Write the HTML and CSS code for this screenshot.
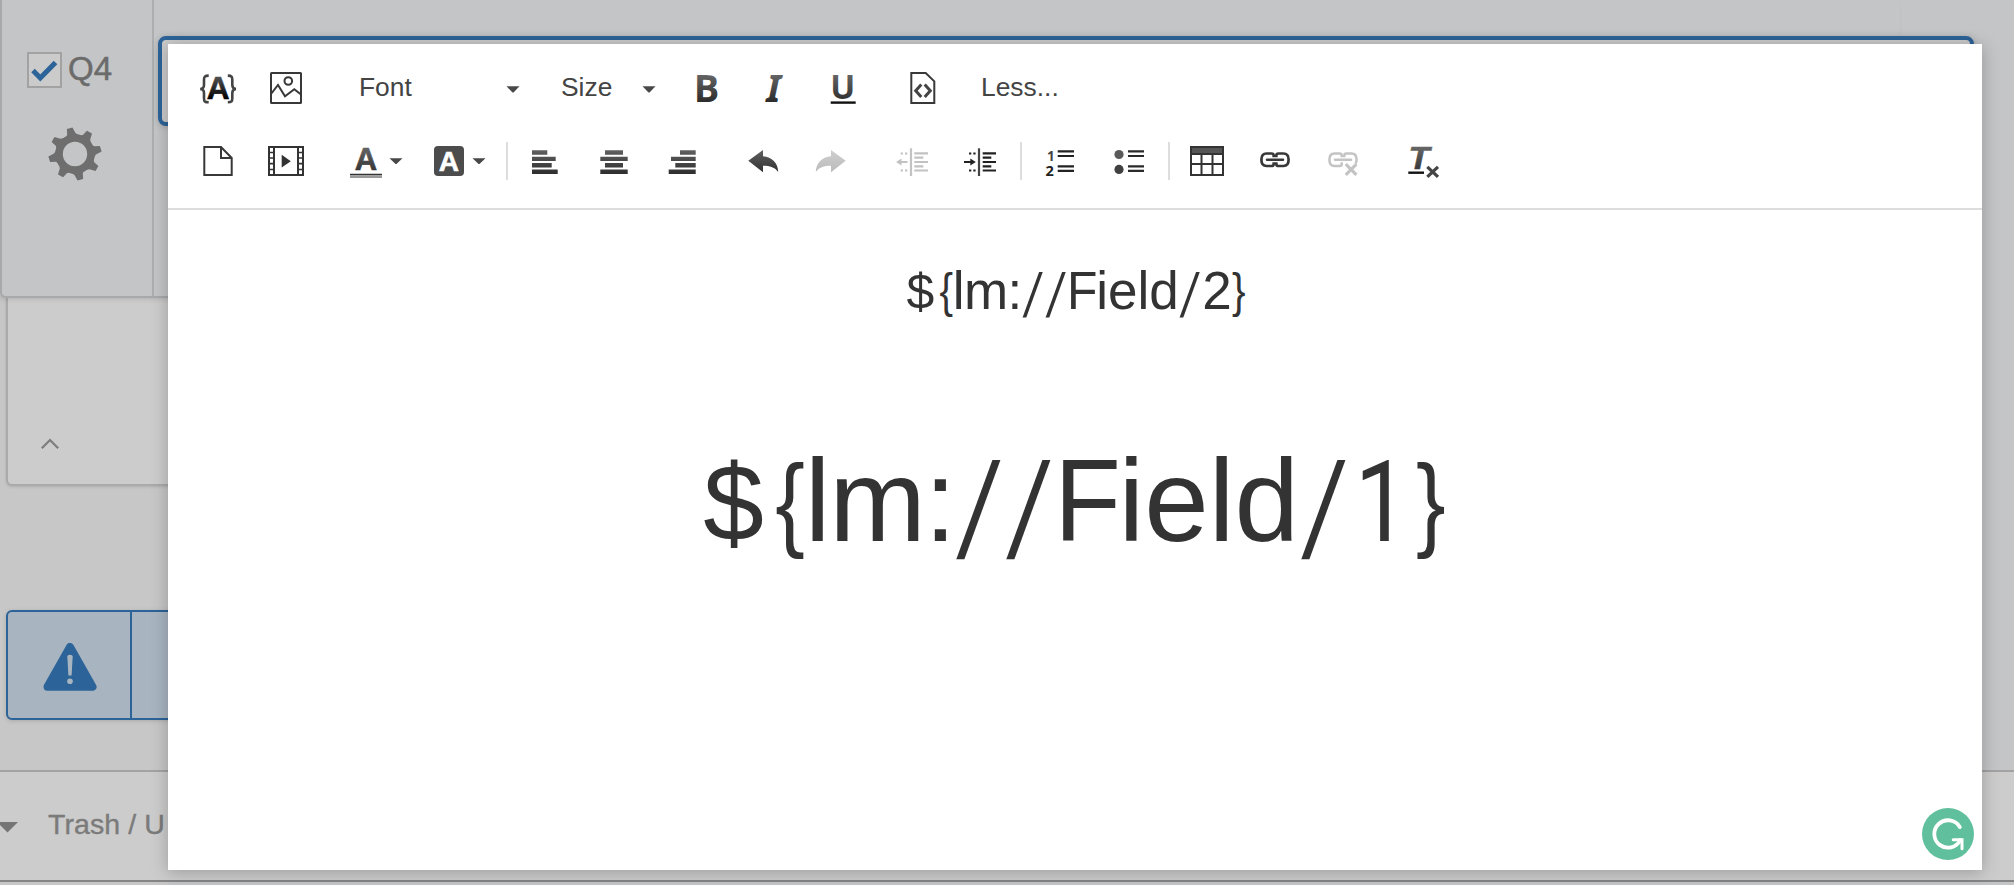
FILE: index.html
```html
<!DOCTYPE html>
<html lang="en">
<head>
<meta charset="utf-8">
<title>Survey editor</title>
<link rel="stylesheet" href="styles.css">
</head>
<body>
<div class="page">
  <section class="question">
    <aside class="question-side">
      <div class="question-label">
        <span class="checkbox"><svg width="31" height="31" viewBox="0 0 31 31"><path d="M4 16.500L11.300 24L26.500 8.500" fill="none" stroke="#2c6398" stroke-width="5"/></svg></span>
        <span class="question-id">Q4</span>
      </div>
      <svg class="gear" width="54" height="54" viewBox="-27 -27 54 54">
        <defs><path id="tooth" d="M17 -6.500L20.500 -4L26 -3.200L26.600 2.600L20.500 4.500L17 8Z"/></defs>
        <g fill="#6e6e6e"><circle r="16" fill="none" stroke="#6e6e6e" stroke-width="7.600"/>
        <use href="#tooth" transform="rotate(-11)"/><use href="#tooth" transform="rotate(34)"/><use href="#tooth" transform="rotate(79)"/><use href="#tooth" transform="rotate(124)"/><use href="#tooth" transform="rotate(169)"/><use href="#tooth" transform="rotate(214)"/><use href="#tooth" transform="rotate(259)"/><use href="#tooth" transform="rotate(304)"/></g>
      </svg>
    </aside>
    <div class="question-main"><div class="question-input"></div></div>
  </section>
  <section class="lower">
    <div class="card"><svg width="20" height="12" viewBox="0 0 20 12"><path d="M1.800 10.300L10 2L18.200 10.300" fill="none" stroke="#7d7d7d" stroke-width="2.200"/></svg></div>
    <div class="notice">
      <div class="notice-icon"><svg width="54" height="48" viewBox="0 0 54 48"><path d="M27 4L49.500 43.800H4.500Z" fill="#2c6398" stroke="#2c6398" stroke-width="8" stroke-linejoin="round"/><path d="M24.300 13.500Q24.300 11.700 27 11.700Q29.700 11.700 29.700 13.500L28.600 32.500H25.400Z" fill="#a8b5c0"/><circle cx="27" cy="38.200" r="2.800" fill="#a8b5c0"/></svg></div>
    </div>
  </section>
  <footer class="trash">
    <svg width="22" height="11" viewBox="0 0 22 11"><path d="M0 0H21L10.500 10.500Z" fill="#757575"/></svg>
    <span class="trash-label">Trash / U</span>
  </footer>
</div>

<div class="editor">
  <svg width="0" height="0" class="defs"><defs>
    <linearGradient id="ink" gradientUnits="userSpaceOnUse" x1="0" y1="6" x2="0" y2="35"><stop offset="0" stop-color="#666"/><stop offset="1" stop-color="#2a2a2a"/></linearGradient>
    <linearGradient id="deep" gradientUnits="userSpaceOnUse" x1="0" y1="8" x2="0" y2="31"><stop offset="0" stop-color="#555"/><stop offset="1" stop-color="#000"/></linearGradient>
    <linearGradient id="pale" gradientUnits="userSpaceOnUse" x1="0" y1="8" x2="0" y2="32"><stop offset="0" stop-color="#cfcfcf"/><stop offset="1" stop-color="#bbb"/></linearGradient>
  </defs></svg>
  <header class="toolbar">
    <div class="tools tools-text">
      <svg class="icon" viewBox="0 0 40 40"><g fill="none" stroke="#444" stroke-width="2.600"><path d="M10.700 7.600C6.700 7.600 6 8.700 6 12V17Q6 20.800 2.200 21Q6 21.200 6 25V30C6 33.500 6.700 34.300 10.700 34.300"/><path d="M29.800 7.600C33.800 7.600 34.300 8.700 34.300 12V17Q34.300 20.800 38 21Q34.300 21.200 34.300 25V30C34.300 33.500 33.800 34.300 29.800 34.300"/></g><text x="20.200" y="31" class="glyph mid" font-size="31.500" fill="url(#deep)" stroke="url(#deep)">A</text></svg>
      <svg class="icon" viewBox="0 0 40 40"><g fill="none" stroke="#383838" stroke-width="2"><rect x="5" y="5" width="30" height="30" rx=".5"/><circle cx="22.300" cy="13" r="3.800"/><path d="M5 26L12 17L19 28.300L28.300 21.300L35 26.500"/></g></svg>
      <span class="select select-font">Font<svg width="14" height="7" viewBox="0 0 14 7"><path d="M.5 .2H13.500L8 6Q7 7 6 6Z" fill="#484848"/></svg></span>
      <span class="select select-size">Size<svg width="14" height="7" viewBox="0 0 14 7"><path d="M.5 .2H13.500L8 6Q7 7 6 6Z" fill="#484848"/></svg></span>
      <svg class="icon" viewBox="0 0 40 40"><text x="6.800" y="33.600" class="glyph open" font-size="38" fill="url(#ink)">B</text></svg>
      <svg class="icon" viewBox="0 0 40 40"><text x="12.300" y="33.600" class="glyph slant" font-size="38" fill="url(#ink)">I</text></svg>
      <svg class="icon" viewBox="0 0 40 40"><text x="19.800" y="30.600" class="glyph open mid" font-size="34" textLength="25" lengthAdjust="spacingAndGlyphs" fill="url(#ink)">U</text><path d="M7.700 34.600H32.700" stroke="#111" stroke-width="2.400"/></svg>
      <svg class="icon" viewBox="0 0 40 40"><path d="M8.300 5H22.700L31.300 13.300V35H8.300Z" fill="none" stroke="#383838" stroke-width="2"/><path d="M18.300 16.500L12.700 22.800L18.300 29M21.700 16.500L27.300 22.800L21.700 29" fill="none" stroke="#444" stroke-width="3"/></svg>
      <span class="less">Less...</span>
    </div>
    <div class="tools tools-format">
      <svg class="icon" viewBox="0 0 40 40"><path d="M6.300 6H23L33.700 17V34H6.300ZM23 6V17H34" fill="none" stroke="#383838" stroke-width="2"/></svg>
      <svg class="icon" viewBox="0 0 40 40"><g fill="none" stroke="#333"><path d="M3 6H37V34H3ZM8 6V34M32 6V34" stroke-width="2"/><path d="M3 11.500H8M3 17H8M3 22.700H8M3 28.500H8M32 11.500H37M32 17H37M32 22.700H37M32 28.500H37" stroke-width="1.700"/></g><path d="M15.700 13.800L24.800 20.200L15.700 26.600Z" fill="#333"/></svg>
      <svg class="icon wide" viewBox="0 0 60 40"><text x="19.900" y="29" class="glyph mid" font-size="31" fill="url(#ink)" stroke="url(#ink)">A</text><path d="M4 33.500H36" stroke="#333" stroke-width="1.500"/><path d="M4 35.600H36" stroke="#999" stroke-width="2.800"/><path d="M43.500 17.200H56.500L51 22.500Q50 23.500 49 22.500Z" fill="#484848"/></svg>
      <svg class="icon wide" viewBox="0 0 60 40"><rect x="5" y="5" width="30" height="30" rx="4" fill="#4c4c4c"/><text x="19.900" y="30" class="glyph mid" font-size="28" fill="#fff" stroke="#fff">A</text><path d="M43.500 17.200H56.500L51 22.500Q50 23.500 49 22.500Z" fill="#484848"/></svg>
      <i class="sep"></i>
      <svg class="icon" viewBox="0 0 40 40"><path d="M7 9.300h15.300v4.400H7zM7 15.700h23.700v4.400H7zM7 22h19.700v4.400H7zM7 28.400h25.700v4.600H7z" fill="url(#ink)"/></svg>
      <svg class="icon" viewBox="0 0 40 40"><path d="M11 9.300h18v4.400H11zM6.300 15.700h27.400v4.400H6.300zM11 22h18v4.400H11zM6.300 28.400h27.400v4.600H6.300z" fill="url(#ink)"/></svg>
      <svg class="icon" viewBox="0 0 40 40"><path d="M18 9.300h15.700v4.400H18zM9 15.700h24.700v4.400H9zM13.300 22h20.400v4.400H13.300zM6.700 28.400h27v4.600h-27z" fill="url(#ink)"/></svg>
      <svg class="icon" viewBox="0 0 40 40"><path d="M5.300 19.800L20 9V15.200C29 16.200 35 21.500 35.200 31C32 26.500 27 24.800 20 24.800V31.200Z" fill="url(#ink)"/></svg>
      <svg class="icon" viewBox="0 0 40 40"><path d="M34.700 19.800L20 9V15.200C11 16.200 5 21.500 4.800 31C8 26.500 13 24.800 20 24.800V31.200Z" fill="url(#pale)"/></svg>
      <svg class="icon" viewBox="0 0 40 40"><g fill="none" stroke="#c2c2c2" stroke-width="2.200"><path d="M19 7.300V35M22.300 12.300H36M22.300 16.700H31.300M22.300 21H36M22.300 25.300H31.300M22.300 29.500H36M6 21H15.500M8.700 12.500h2.300M13 12.500h2.300M8.700 29.500h2.300M13 29.500h2.300"/></g><path d="M4 21L9.500 17.500V24.500Z" fill="#c2c2c2"/></svg>
      <svg class="icon" viewBox="0 0 40 40"><g fill="none" stroke="#222" stroke-width="2.200"><path d="M19 7.300V35" stroke="#444"/><path d="M22.700 12.300H36M22.700 16.700H31.300M22.700 21H36M22.700 25.300H31.300M22.700 29.500H36M4 21H13M9 12.500h2.300M13.300 12.500h2.300M9 29.500h2.300M13.300 29.500h2.300"/></g><path d="M15.800 21L10.300 17.500V24.500Z" fill="#222"/></svg>
      <i class="sep"></i>
      <svg class="icon" viewBox="0 0 40 40"><path d="M17.700 10.300H34M17.700 15H34M17.700 25.300H34M17.700 29.800H34" stroke="#222" stroke-width="2.200"/><text x="7" y="19.700" class="glyph open" font-size="13.500" fill="#444">1</text><text x="5.600" y="35" class="glyph open" font-size="14.500" fill="#222">2</text></svg>
      <svg class="icon" viewBox="0 0 40 40"><path d="M19 10.300H35M19 15H35M19 25.300H35M19 29.800H35" stroke="#2a2a2a" stroke-width="2.200"/><circle cx="10" cy="13.500" r="4.600" fill="#5a5a5a"/><circle cx="10" cy="28.400" r="4.600" fill="#404040"/></svg>
      <i class="sep"></i>
      <svg class="icon" viewBox="0 0 40 40"><path d="M3 5H37V13H3Z" fill="#555"/><path d="M4 6H36V34H4ZM4 13H36M14.500 12V34M25.500 12V34M4 23H36" fill="none" stroke="#333" stroke-width="2"/></svg>
      <svg class="icon" viewBox="0 0 40 40"><g fill="none" stroke="#383838" stroke-width="2.700"><path d="M18.700 16.200V14.500Q18.700 12.500 16.500 12.500H11.500Q6.400 12.500 6.400 18.700T11.500 25H16.500Q18.700 25 18.700 23V21.200M21.300 16.200V14.500Q21.300 12.500 23.500 12.500H28.500Q33.600 12.500 33.600 18.700T28.500 25H23.500Q21.300 25 21.300 23V21.200"/><path d="M12 18.700H28" stroke-linecap="round" stroke-width="2.500"/></g></svg>
      <svg class="icon" viewBox="0 0 40 40"><g fill="none" stroke="#c4c4c4" stroke-width="2.500"><path d="M18.700 16.200V14.500Q18.700 12.500 16.500 12.500H11.500Q6.400 12.500 6.400 18.700T11.500 25H16.500Q18.700 25 18.700 23V21.200M21.300 16.200V14.500Q21.300 12.500 23.500 12.500H28.500Q33.600 12.500 33.600 18.700Q33.600 21 32.500 22.500"/><path d="M12 18.700H28" stroke-linecap="round"/><path d="M22.800 23.200L33.400 33.800M33.400 23.200L22.800 33.800" stroke-width="3.200"/></g></svg>
      <svg class="icon" viewBox="0 0 40 40"><text x="4.500" y="28.300" class="glyph slant-sans" font-size="31" textLength="21" lengthAdjust="spacingAndGlyphs" fill="url(#ink)" stroke="url(#ink)">T</text><path d="M4.300 31.700H20" stroke="#111" stroke-width="2.400"/><path d="M23.300 25.800L34 35.800M34 25.800L23.300 35.800" stroke="#444" stroke-width="3.200"/></svg>
    </div>
  </header>
  <main class="content">
    <p class="line-small"><span class="dollar">$</span><span class="brace open-brace">{</span><span class="tight">lm:</span><span class="slash">/</span><span class="slash">/</span><span class="cap">F</span>iel<span class="dee">d</span><span class="slash">/</span><span class="two">2</span><span class="brace">}</span></p>
    <p class="line-large"><span class="dollar">$</span><span class="brace open-brace">{</span><span class="tight">lm:</span><span class="slash">/</span><span class="slash">/</span><span class="cap">F</span>iel<span class="dee">d</span><span class="slash">/</span><span class="one">1</span><span class="brace">}</span></p>
  </main>
  <svg class="grammarly" width="52" height="52" viewBox="-26 -26 52 52"><circle r="26" fill="#60bf9c"/><path d="M11.800 -7A13.700 13.700 0 1 0 12.300 6" fill="none" stroke="#fff" stroke-width="3.800" stroke-linecap="round"/><path d="M5.200 5.700H14V14.800" fill="none" stroke="#fff" stroke-width="3" stroke-linecap="round"/></svg>
</div>
</body>
</html>
```
FILE: styles.css
```css
* { box-sizing: border-box; }

body {
  margin: 0;
  width: 2014px;
  height: 885px;
  overflow: hidden;
  position: relative;
  font-family: "Liberation Sans", Arial, sans-serif;
  background: #c7c7c7;
}

.page {
  height: 885px;
  display: flex;
  flex-direction: column;
  background: linear-gradient(90deg, #c7c7c7 168px, #c4c5c7 168px);
}

.question {
  width: 1900px;
  height: 298px;
  display: flex;
  background: #c4c5c7;
  border-left: 2px solid #a8a9ab;
  border-bottom: 2px solid #a8a9ab;
  border-bottom-left-radius: 6px;
  box-shadow: -2px 2px 4px rgba(0, 0, 0, .1);
  position: relative;
}

.question-side {
  flex: none;
  width: 152px;
  padding: 52px 0 0 25px;
  border-right: 2px solid #adaeb0;
}

.question-label { display: flex; gap: 6px; height: 36px; }

.checkbox {
  width: 35px;
  height: 36px;
  border: 2px solid #a2a2a2;
  background: #cbcbcb;
}

.question-id {
  font-size: 33px;
  line-height: 33px;
  color: #6b6b6b;
  -webkit-text-stroke: .5px #6b6b6b;
}

.gear { display: block; margin: 39px 0 0 21px; }

.question-main { padding: 36px 0 0 4px; }

.question-input {
  width: 1816px;
  height: 90px;
  border: 4px solid #2c6398;
  border-radius: 8px;
  background: #cbcbcb;
  box-shadow: 0 1px 6px rgba(0, 0, 0, .18);
}

.lower { height: 472px; width: 300px; padding-left: 6px; }

.card {
  height: 188px;
  padding: 138px 0 0 32px;
  border: 2px solid #aaa;
  border-top: 0;
  border-bottom-left-radius: 6px;
  background: #ccc;
  box-shadow: 0 1px 3px rgba(0, 0, 0, .12);
}

.notice {
  height: 110px;
  margin-top: 124px;
  border: 2px solid #2c6398;
  border-radius: 6px;
  background: #a8b5c0;
  box-shadow: 0 1px 4px rgba(0, 0, 0, .15);
}

.notice-icon {
  width: 124px;
  height: 106px;
  padding: 31px 0 0 35px;
  border-right: 2px solid #2c6398;
}

.trash {
  height: 112px;
  display: flex;
  gap: 31px;
  border-top: 2px solid #a3a3a3;
  border-bottom: 2px solid #858585;
  background: #ccc;
}

.trash svg { margin: 50px 0 0 -3px; flex: none; }

.trash-label {
  white-space: nowrap;
  margin-left: -2px;
  padding-top: 36px;
  font-size: 28.5px;
  line-height: 32px;
  letter-spacing: .1px;
  color: #7b7b7b;
  -webkit-text-stroke: .4px #7b7b7b;
}

.editor {
  position: absolute;
  left: 168px;
  top: 44px;
  width: 1814px;
  height: 826px;
  background: #fff;
  box-shadow: 0 2px 16px rgba(0, 0, 0, .25);
}

.defs { position: absolute; }

.toolbar {
  height: 166px;
  padding: 24px 0 0 30px;
  display: flex;
  flex-direction: column;
  gap: 33px;
  border-bottom: 2px solid #ddd;
}

.tools { display: grid; height: 40px; align-items: center; justify-content: start; }
.tools-text { grid-template-columns: 68px 93px 202px 126px 67px 69px 80px 77px auto; }
.tools-format { grid-template-columns: 68px 80px 83px 77px 19px 69px 68px 81px 68px 81px 68px 60px 20px 69px 59px 19px 68px 68px 81px 40px; }

.icon { width: 40px; height: 40px; display: block; overflow: visible; }
.icon.wide { width: 60px; }

.glyph { font-family: "Liberation Sans", Arial, sans-serif; font-weight: 700; stroke-width: .6px; }
.mid { text-anchor: middle; }
.open { font-family: "Open Sans", sans-serif; }
.slant { font-family: "Noto Sans", sans-serif; font-style: italic; }
.slant-sans { font-style: italic; }

.select, .less { font-size: 26.4px; line-height: 30px; color: #444; padding-bottom: 2px; }
.select { display: flex; justify-content: space-between; align-items: center; }
.select svg { position: relative; top: 2px; }
.select-font { width: 161px; }
.select-size { width: 95px; }
.less { margin-left: 1px; }

.sep { width: 2px; height: 38px; background: #ddd; }

.content {
  padding: 43px 0 0 4px;
  text-align: center;
  color: #333;
}

.content p { margin: 0; white-space: nowrap; }
.content span { display: inline-block; line-height: 0; }
.line-small { font-size: 53px; line-height: 76px; }
.content .line-large { font-size: 116px; line-height: 160px; margin-top: 92px; }

.dollar { font-size: .94em; margin-right: .055em; }
.brace { font-size: .9em; vertical-align: .035em; transform: scaleX(.85); transform-origin: left; }
.open-brace { transform-origin: right; }
.tight { letter-spacing: -.012em; }
.slash {
  font-family: "Noto Sans CJK JP", sans-serif;
  font-size: .88em;
  margin-right: .1em;
  transform: scaleX(1.18);
  transform-origin: left;
}
.cap { margin-left: -.03em; margin-right: -.04em; transform: scaleX(.94); }
.dee { margin-right: .01em; }
.one { font-family: Roboto, sans-serif; font-size: .97em; margin-right: .02em; transform: scaleX(.85); }

.grammarly { position: absolute; left: 1754px; top: 764px; }
```
